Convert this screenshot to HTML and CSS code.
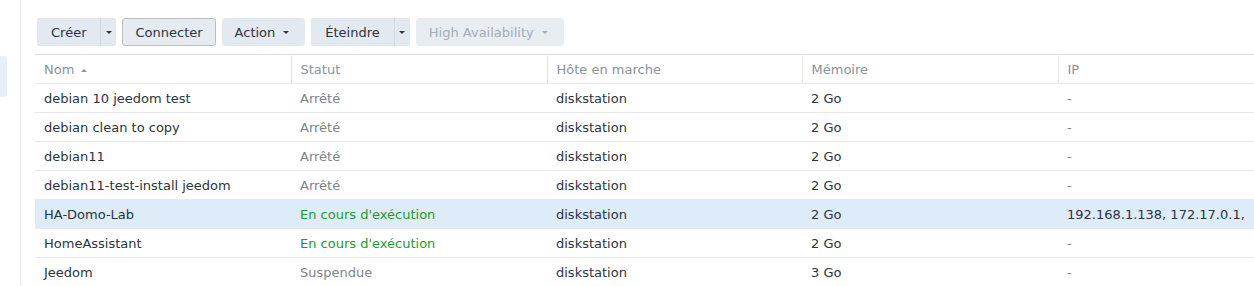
FILE: index.html
```html
<!DOCTYPE html>
<html lang="fr">
<head>
    <meta charset="UTF-8">
    <meta name="viewport" content="width=device-width, initial-scale=1.0">
    <title>Virtual Machine Manager</title>
    <link rel="stylesheet" href="styles.css">
</head>
<body>
    <div class="app">
        <div class="sidebar">
            <div class="side-item"></div>
        </div>
        <div class="main">
            <div class="toolbar">
                <div class="split">
                    <button class="btn">Créer</button>
                    <button class="btn caret-btn"><span class="caret"></span></button>
                </div>
                <button class="btn btn-outline">Connecter</button>
                <button class="btn btn-menu">Action <span class="caret"></span></button>
                <div class="split">
                    <button class="btn">Éteindre</button>
                    <button class="btn caret-btn"><span class="caret"></span></button>
                </div>
                <button class="btn btn-menu disabled">High Availability <span class="caret"></span></button>
            </div>
            <table class="grid">
                <colgroup>
                    <col class="col-wide">
                    <col class="col-wide">
                    <col class="col-narrow">
                    <col class="col-wide">
                    <col>
                </colgroup>
                <thead>
                    <tr>
                        <th>Nom <span class="sort"></span></th>
                        <th>Statut</th>
                        <th>Hôte en marche</th>
                        <th>Mémoire</th>
                        <th>IP</th>
                    </tr>
                </thead>
                <tbody>
                    <tr>
                        <td>debian 10 jeedom test</td>
                        <td class="stopped">Arrêté</td>
                        <td>diskstation</td>
                        <td>2 Go</td>
                        <td class="dash">-</td>
                    </tr>
                    <tr>
                        <td>debian clean to copy</td>
                        <td class="stopped">Arrêté</td>
                        <td>diskstation</td>
                        <td>2 Go</td>
                        <td class="dash">-</td>
                    </tr>
                    <tr>
                        <td>debian11</td>
                        <td class="stopped">Arrêté</td>
                        <td>diskstation</td>
                        <td>2 Go</td>
                        <td class="dash">-</td>
                    </tr>
                    <tr>
                        <td>debian11-test-install jeedom</td>
                        <td class="stopped">Arrêté</td>
                        <td>diskstation</td>
                        <td>2 Go</td>
                        <td class="dash">-</td>
                    </tr>
                    <tr class="selected">
                        <td>HA-Domo-Lab</td>
                        <td class="running">En cours d'exécution</td>
                        <td>diskstation</td>
                        <td>2 Go</td>
                        <td>192.168.1.138, 172.17.0.1,</td>
                    </tr>
                    <tr>
                        <td>HomeAssistant</td>
                        <td class="running">En cours d'exécution</td>
                        <td>diskstation</td>
                        <td>2 Go</td>
                        <td class="dash">-</td>
                    </tr>
                    <tr>
                        <td>Jeedom</td>
                        <td class="stopped">Suspendue</td>
                        <td>diskstation</td>
                        <td>3 Go</td>
                        <td class="dash">-</td>
                    </tr>
                </tbody>
            </table>
        </div>
    </div>
</body>
</html>
```
FILE: styles.css
```css
body {
    margin: 0;
    background: #fff;
    font-family: "DejaVu Sans", Verdana, sans-serif;
    font-size: 13px;
    color: #2b3440;
    overflow: hidden;
}

.app {
    display: flex;
    height: 286px;
}

.sidebar {
    width: 20px;
    flex: none;
    border-right: 1px solid #e4e7eb;
    padding-top: 56px;
}

.side-item {
    width: 7px;
    height: 41px;
    background: #e5effa;
    border-radius: 0 3px 3px 0;
}

.main {
    flex: 1;
    padding: 18px 0 0 14px;
    min-width: 0;
}

.toolbar {
    display: flex;
    gap: 6px;
    padding-left: 2px;
    margin-bottom: 8px;
}

.split {
    display: flex;
    gap: 1px;
    background: #d3d9e0;
    border-radius: 3px;
}

.btn {
    font-family: inherit;
    font-size: 13px;
    color: #2b3440;
    height: 28px;
    padding: 0 12px;
    border: 1px solid #e3e9f0;
    border-radius: 3px;
    background: #e3e9f0;
    display: flex;
    align-items: center;
    gap: 8px;
}

.btn-menu {
    padding-right: 15px;
}

.split .btn:first-child {
    border-radius: 3px 0 0 3px;
    padding: 0 13px;
}

.split .caret-btn {
    border-radius: 0 3px 3px 0;
    width: 15px;
    padding: 0;
    justify-content: center;
}

.btn-outline {
    background: #e6ebf1;
    border-color: #b7bec7;
}

.btn.disabled {
    color: #a3acb7;
    background: #e8edf2;
    border-color: #e8edf2;
}

.caret {
    width: 0;
    height: 0;
    border-left: 3px solid transparent;
    border-right: 3px solid transparent;
    border-top: 3px solid currentColor;
}

.grid {
    width: 100%;
    border-collapse: collapse;
    table-layout: fixed;
}

.col-wide {
    width: 256px;
}

.col-narrow {
    width: 255px;
}

.grid th,
.grid td {
    height: 28px;
    padding: 0 9px;
    text-align: left;
    white-space: nowrap;
    overflow: hidden;
    border-bottom: 1px solid #e6e9ed;
}

.grid th {
    font-weight: normal;
    color: #8a929c;
    border-top: 1px solid #d7dbe0;
    border-right: 1px solid #e6e9ed;
}

.grid th:last-child {
    border-right: none;
}

.sort {
    display: inline-block;
    vertical-align: middle;
    margin-left: 3px;
    border-left: 3px solid transparent;
    border-right: 3px solid transparent;
    border-bottom: 3px solid #8a929c;
}

.stopped {
    color: #7d848c;
}

.running {
    color: #1e9a2e;
}

.dash {
    color: #7d848c;
}

.selected td {
    background: #deebf8;
}
```
